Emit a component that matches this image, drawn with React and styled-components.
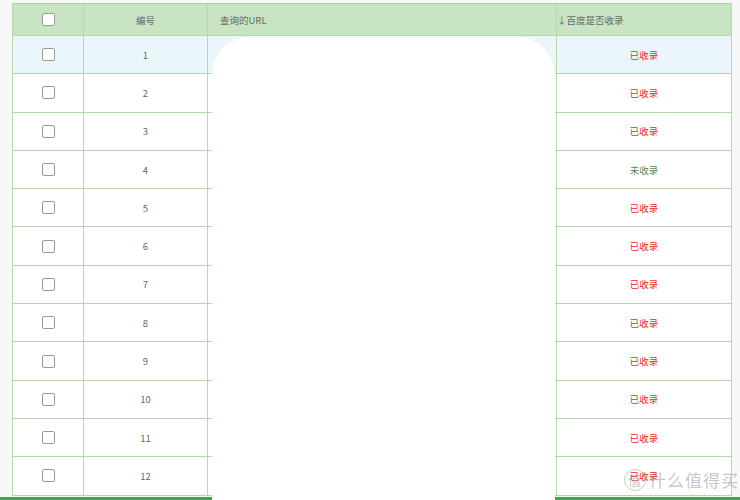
import styled, { createGlobalStyle } from 'styled-components';

const GlobalStyle = createGlobalStyle`
  html, body {
    margin: 0;
    padding: 0;
    background: #f7f8f8;
    font-family: "Noto Sans CJK SC", "Noto Sans", sans-serif;
    overflow: hidden;
  }
`;

const Page = styled.div`
  position: relative;
  width: 740px;
  height: 500px;
  overflow: hidden;
`;

const Table = styled.div`
  margin: 3px 8px 0 12px;
  border-left: 1px solid #b5d9ad;
  border-right: 1px solid #b5d9ad;
  background: #fff;
`;

const Row = styled.div`
  display: grid;
  grid-template-columns: 70px 124px 349px 1fr;
  height: ${p => (p.$head ? '31px' : '37.3px')};
  background: ${p => (p.$head ? '#c9e4c3' : p.$active ? '#ebf6fb' : '#fff')};
  border-top: ${p => (p.$head ? '1px solid #a9cfa1' : 'none')};
  border-bottom: 1px solid #b3d7ab;
`;

const Cell = styled.div`
  display: flex;
  align-items: center;
  justify-content: ${p => (p.$left ? 'flex-start' : 'center')};
  padding-left: ${p => p.$pad || 0}px;
  border-left: ${p => (p.$first ? 'none' : '1px solid #b5d9ad')};
  font-size: 9.5px;
  color: ${p => p.$color || '#666'};
  white-space: nowrap;
`;

const Box = styled.span`
  width: 13px;
  height: 13px;
  border: 1px solid #9a9a9a;
  border-radius: 2px;
  background: #fff;
  box-sizing: border-box;
`;

const Mask = styled.div`
  position: absolute;
  left: 212px;
  top: 37px;
  width: 343px;
  height: 470px;
  background: #fff;
  border-radius: 38px 38px 0 0;
`;

const BottomBar = styled.div`
  height: 5px;
  margin-top: 1px;
  background: #34a853;
`;

const Watermark = styled.div`
  position: absolute;
  left: 624px;
  top: 467px;
  display: flex;
  align-items: center;
  gap: 3px;
  color: rgba(150, 150, 150, 0.55);
  font-size: 17px;
  letter-spacing: 1px;
`;

const Logo = styled.span`
  width: 20px;
  height: 20px;
  border-radius: 50%;
  border: 1.5px solid rgba(150, 150, 150, 0.5);
  display: flex;
  align-items: center;
  justify-content: center;
  font-size: 13px;
`;

const rows = [1, 2, 3, 4, 5, 6, 7, 8, 9, 10, 11, 12].map(n => ({
  id: n,
  ok: n !== 4,
}));

const App = () => {
  return (
    <Page>
      <GlobalStyle />
      <Table>
        <Row $head>
          <Cell $first><Box /></Cell>
          <Cell>编号</Cell>
          <Cell $left $pad={12}>查询的URL</Cell>
          <Cell $left>↓百度是否收录</Cell>
        </Row>
        {rows.map(r => (
          <Row key={r.id} $active={r.id === 1}>
            <Cell $first><Box /></Cell>
            <Cell>{r.id}</Cell>
            <Cell />
            <Cell $color={r.ok ? '#ee2a2a' : '#4f8a5b'}>{r.ok ? '已收录' : '未收录'}</Cell>
          </Row>
        ))}
      </Table>
      <BottomBar />
      <Mask />
      <Watermark>
        <Logo>值</Logo>
        <span>什么值得买</span>
      </Watermark>
    </Page>
  );
};

export default App;
